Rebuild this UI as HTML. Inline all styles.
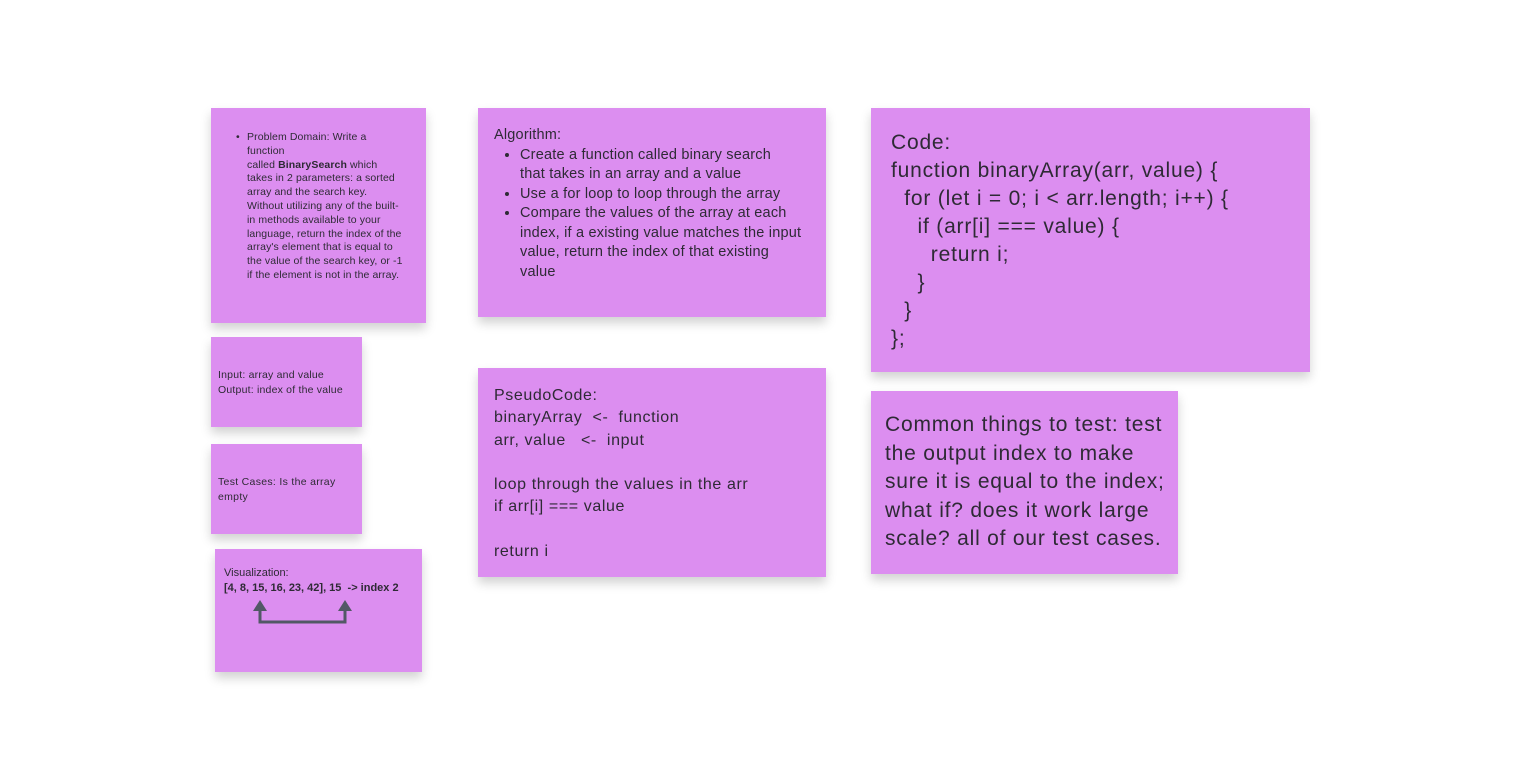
<!DOCTYPE html>
<html><head><style>
body{margin:0;width:1521px;height:781px;background:#fff;position:relative;overflow:hidden;font-family:"Liberation Sans",sans-serif;color:#2e2a35}
.n{position:absolute;background:#dc8ef0;box-shadow:0 6px 10px rgba(0,0,0,0.18);box-sizing:border-box}
.t{position:absolute;white-space:nowrap}
ul{margin:0;padding-left:26px}
li{white-space:nowrap}
</style></head><body>
<div class="n" style="left:211px;top:108px;width:215px;height:215px">
<div style="position:absolute;left:22px;top:23px;width:190px;font-size:10.5px;line-height:13.8px;padding-left:14px;white-space:nowrap;letter-spacing:0.1px">
<span style="position:absolute;left:3px">•</span>Problem Domain: Write a<br>function<br>called <b>BinarySearch</b> which<br>takes in 2 parameters: a sorted<br>array and the search key.<br>Without utilizing any of the built-<br>in methods available to your<br>language, return the index of the<br>array's element that is equal to<br>the value of the search key, or -1<br>if the element is not in the array.</div></div>
<div class="n" style="left:211px;top:337px;width:151px;height:90px"><div class="t" style="left:7px;top:31px;font-size:10.5px;line-height:15px;letter-spacing:0.2px">Input: array and value<br>Output: index of the value</div></div>
<div class="n" style="left:211px;top:444px;width:151px;height:90px"><div class="t" style="left:7px;top:31px;font-size:10.5px;line-height:15px;letter-spacing:0.3px">Test Cases: Is the array<br>empty</div></div>
<div class="n" style="left:215px;top:549px;width:207px;height:123px"><div class="t" style="left:9px;top:17px;font-size:11px;line-height:15px">Visualization:<br><b>[4, 8, 15, 16, 23, 42], 15 &nbsp;-&gt; index 2</b></div>
<svg style="position:absolute;left:0;top:0" width="207" height="123"><g fill="#525866"><polygon points="38,62 52,62 45,51"/><polygon points="123,62 137,62 130,51"/></g><path d="M45,61V73H130V61" fill="none" stroke="#525866" stroke-width="3"/></svg></div>
<div class="n" style="left:478px;top:108px;width:348px;height:209px"><div style="position:absolute;left:16px;top:18px;width:330px;font-size:14.5px;line-height:19.5px;letter-spacing:0.2px">Algorithm:<ul><li>Create a function called binary search<br>that takes in an array and a value</li><li>Use a for loop to loop through the array</li><li>Compare the values of the array at each<br>index, if a existing value matches the input<br>value, return the index of that existing<br>value</li></ul></div></div>
<div class="n" style="left:478px;top:368px;width:348px;height:209px"><div class="t" style="left:16px;top:17px;font-size:16px;line-height:22.3px;white-space:pre;letter-spacing:0.6px">PseudoCode:
binaryArray  &lt;-  function
arr, value   &lt;-  input

loop through the values in the arr
if arr[i] === value

return i</div></div>
<div class="n" style="left:871px;top:108px;width:439px;height:264px"><div class="t" style="left:20px;top:21px;font-size:21px;line-height:28px;white-space:pre;letter-spacing:0.8px">Code:
function binaryArray(arr, value) {
  for (let i = 0; i &lt; arr.length; i++) {
    if (arr[i] === value) {
      return i;
    }
  }
};</div></div>
<div class="n" style="left:871px;top:391px;width:307px;height:183px"><div class="t" style="left:14px;top:20px;font-size:21px;line-height:28.5px;letter-spacing:0.8px">Common things to test: test<br>the output index to make<br>sure it is equal to the index;<br>what if? does it work large<br>scale? all of our test cases.</div></div>
</body></html>
